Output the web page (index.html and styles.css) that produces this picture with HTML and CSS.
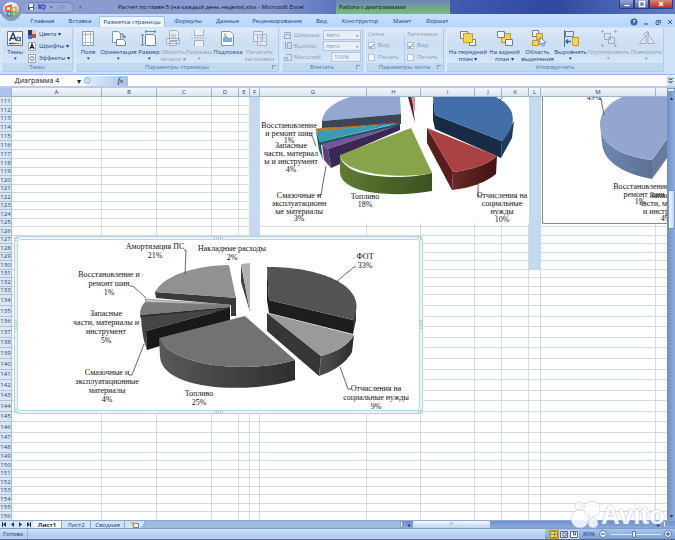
FILE: index.html
```html
<!DOCTYPE html>
<html lang="ru">
<head>
<meta charset="utf-8">
<title>Microsoft Excel</title>
<link rel="stylesheet" href="styles.css">
</head>
<body>
<header class="titlebar">
  <div class="quick">
    <button class="qbtn" aria-label="Сохранить"><svg width="8" height="8" viewBox="0 0 8 8"><path d="M1 1h6v6H1z" fill="#4a55b8"/><path d="M2 1h4v3H2z" fill="#e8efff"/><path d="M3 5h3v2H3z" fill="#fff"/></svg></button>
    <button class="qbtn" aria-label="Отменить"><svg width="9" height="8" viewBox="0 0 9 8"><path d="M1 1v4h4M1.500 4.500C3 1.500 7 1 7 4c0 1.500-1 2.500-2 3" fill="none" stroke="#3a50c0" stroke-width="1.400"/></svg></button>
    <span class="mini">▾</span>
    <button class="qbtn faded" aria-label="Вернуть"><svg width="9" height="8" viewBox="0 0 9 8"><path d="M8 1v4H4M7.500 4.500C6 1.500 2 1 2 4c0 1.500 1 2.500 2 3" fill="none" stroke="#6f7fb8" stroke-width="1.200"/></svg></button>
  </div>
  <span class="mini more">▾</span>
  <h1 class="doc-title">Расчет по главе 5 (на каждый день недели).xlsx - Microsoft Excel</h1>
  <div class="context">Работа с диаграммами</div>
  <div class="winbtns">
    <button aria-label="Свернуть"><svg width="10" height="8"><path d="M2 4.500h6v2H2z" fill="#fff" stroke="#445" stroke-width=".5"/></svg></button>
    <button aria-label="Развернуть"><svg width="10" height="8"><path d="M2.500 1.500h5v5h-5z" fill="none" stroke="#fff" stroke-width="1.500"/></svg></button>
    <button class="close" aria-label="Закрыть"><svg width="10" height="8"><path d="M3 2l4 4M7 2L3 6" stroke="#fff" stroke-width="1.600"/></svg></button>
  </div>
</header>

<button class="office" aria-label="Кнопка Office">
  <svg width="20" height="20" viewBox="0 0 20 20">
    <defs><radialGradient id="orb" cy=".3"><stop offset="0" stop-color="#fff"/><stop offset=".65" stop-color="#dfe4ee"/><stop offset="1" stop-color="#8e9ab8"/></radialGradient></defs>
    <circle cx="10" cy="10" r="9.600" fill="url(#orb)" stroke="#6c7cae" stroke-width=".6"/>
    <g fill="none" stroke-width="1.700"><path d="M5 6l5-1.500v5l-5 .5z" stroke="#e2582a"/><path d="M11 6.500h4v4h-4z" stroke="#f0a52c"/><path d="M6.500 11h3.500v4H6.500z" stroke="#4b83c9"/><path d="M11 11.500h4v3.500h-4z" stroke="#7cb342"/></g>
  </svg>
</button>

<nav class="tabs">
  <button class="t-home">Главная</button><button class="t-ins">Вставка</button><button class="t-page active">Разметка страницы</button><button class="t-form">Формулы</button><button class="t-data">Данные</button><button class="t-rev">Рецензирование</button><button class="t-view">Вид</button><button class="t-con">Конструктор</button><button class="t-mak">Макет</button><button class="t-fmt">Формат</button>
  <div class="docbtns">
    <button aria-label="Справка"><svg width="8" height="8"><circle cx="4" cy="4" r="3.500" fill="#3265cf"/><path d="M3 3q1-1.500 2 0q0 .7-1 1.200v.8" fill="none" stroke="#fff"/></svg></button>
    <button aria-label="Свернуть окно"><svg width="8" height="8"><path d="M2 6h4" stroke="#46618f" stroke-width="1.200"/></svg></button>
    <button aria-label="Восстановить окно"><svg width="8" height="8"><path d="M2.500 2.500H6.500V5M2 4h3v2.500H2z" fill="none" stroke="#46618f"/></svg></button>
    <button aria-label="Закрыть окно"><svg width="8" height="8"><path d="M2 2l4 4M6 2L2 6" stroke="#46618f"/></svg></button>
  </div>
</nav>

<section class="ribbon">
  <div class="group g-themes">
    <div class="body">
      <button class="big w-theme"><svg width="18" height="17" viewBox="0 0 18 17"><path d="M1.500 1.500h15v14h-15z" fill="#fff" stroke="#64779c"/><path d="M3.500 11L7 3l3.500 8M5 8.500h4" fill="none" stroke="#23406e" stroke-width="1.500"/><circle cx="12.500" cy="9" r="1.800" fill="none" stroke="#3c6aa8" stroke-width="1.300"/><path d="M14.500 7v4.500" stroke="#3c6aa8"/><path d="M3 13.500h3" stroke="#2c4c86" stroke-width="1.500"/><path d="M6 13.500h3" stroke="#b23a2c" stroke-width="1.500"/><path d="M9 13.500h3" stroke="#7aa23c" stroke-width="1.500"/><path d="M12 13.500h3" stroke="#e09a3c" stroke-width="1.500"/></svg><span>Темы</span><i>▾</i></button>
      <div class="stack">
        <button><svg width="9" height="9"><path d="M0 0h4v5H0z" fill="#24406e"/><path d="M4 0h4v4H4z" fill="#b9cfe8"/><path d="M0 5h4v4H0z" fill="#4573c0"/><path d="M4 4h4v4H4z" fill="#cf4a28"/></svg>Цвета ▾</button>
        <button><svg width="9" height="9"><path d="M.5.5h7v8h-7z" fill="#fff" stroke="#9aa8c0"/><path d="M2 7l2-5 2 5M3 5.500h2" fill="none" stroke="#111" stroke-width="1.100"/></svg>Шрифты ▾</button>
        <button><svg width="9" height="9"><path d="M.5.5h7v8h-7z" fill="#fff" stroke="#9aa8c0"/><circle cx="4" cy="4.500" r="2" fill="#dfe7f2" stroke="#7688a8"/></svg>Эффекты ▾</button>
      </div>
    </div>
    <h2>Темы</h2>
  </div>
  <div class="group g-page">
    <div class="body">
      <button class="big w24"><svg width="16" height="17" viewBox="0 0 16 17"><path d="M2.500 1.500h11v14h-11z" fill="#fff" stroke="#8295b5"/><path d="M5.500 1v15M10.500 1v15M2 4.500h12M2 12.500h12" stroke="#a9bfe0"/></svg><span>Поля</span><i>▾</i></button>
      <button class="big w37"><svg width="16" height="17" viewBox="0 0 16 17"><path d="M1.500 1.500h6l2 2v9h-8z" fill="#f5f8fd" stroke="#8295b5"/><path d="M5.500 9.500h7l2 2v4h-9z" fill="#fff" stroke="#7088b0"/><path d="M9 4q4-1 4 4M11 6l2 2 2-2" fill="none" stroke="#7b8698" stroke-width="1.200"/></svg><span>Ориентация</span><i>▾</i></button>
      <button class="big w24"><svg width="16" height="17" viewBox="0 0 16 17"><path d="M4.500 4.500h8l2 2v9h-10z" fill="#fff" stroke="#6b86b4"/><path d="M4 1.500h11M1.500 4v12M5 0v3M14 0v3M0 5h3M0 15h3" stroke="#6b86b4"/></svg><span>Размер</span><i>▾</i></button>
      <button class="big w24 off"><svg width="16" height="17" viewBox="0 0 16 17"><path d="M4.500.5h7l2 2v8h-9zM1.500 8.500h13v5h-13zM4.500 11.500h7v4h-7z" fill="#e9eef5" stroke="#a3b0c4"/><path d="M6 4h5v4H6z" fill="#c6d0de"/></svg><span>Область<br>печати ▾</span></button>
      <button class="big w28 off"><svg width="16" height="17" viewBox="0 0 16 17"><path d="M3.500 0v5.500h9V0M3.500 16v-5.500h9V16" fill="#edf1f7" stroke="#a3b0c4"/><path d="M0 8h16" stroke="#a3b0c4" stroke-dasharray="2 1"/></svg><span>Разрывы</span><i>▾</i></button>
      <button class="big w30"><svg width="16" height="17" viewBox="0 0 16 17"><path d="M1.500 1.500h9l3 3v11h-12z" fill="#fff" stroke="#8295b5"/><path d="M3 12V8l3-3 3 3 3-1v5z" fill="#86a9d8"/><circle cx="5" cy="4.500" r="1.300" fill="#e8b64c"/></svg><span>Подложка</span></button>
      <button class="big w33 off"><svg width="16" height="17" viewBox="0 0 16 17"><path d="M1.500 1.500h9v10h-9zM5.500 4.500h9v11h-9z" fill="#e9eef5" stroke="#a3b0c4"/><path d="M5 8h10M5 11.500h10M9 4v12M1 4.500h9" stroke="#b3bfd0"/></svg><span>Печатать<br>заголовки</span></button>
    </div>
    <h2>Параметры страницы<b></b></h2>
  </div>
  <div class="group g-fit">
    <div class="body form">
      <label for="fw"><svg width="8" height="8"><path d="M.5 3.500h6v4h-6zM0 1.500h7" fill="none" stroke="#9aa8be"/></svg>Ширина:</label><select id="fw" disabled><option>Авто</option></select>
      <label for="fh"><svg width="8" height="8"><path d="M3.500.5h4v6h-4zM1.500 0v7" fill="none" stroke="#9aa8be"/></svg>Высота:</label><select id="fh" disabled><option>Авто</option></select>
      <label for="fs"><svg width="8" height="8"><path d="M.5 4.500h3v3h-3zM2.500 1.500h5v6h-3" fill="none" stroke="#9aa8be"/></svg>Масштаб:</label><input id="fs" class="scale" value="100%" disabled>
    </div>
    <h2>Вписать<b></b></h2>
  </div>
  <div class="group g-sheet">
    <div class="body checks">
      <fieldset><legend>Сетка</legend><label><input type="checkbox" checked disabled>Вид</label><label><input type="checkbox" disabled>Печать</label></fieldset>
      <fieldset><legend>Заголовки</legend><label><input type="checkbox" checked disabled>Вид</label><label><input type="checkbox" disabled>Печать</label></fieldset>
    </div>
    <h2>Параметры листа<b></b></h2>
  </div>
  <div class="group g-arr">
    <div class="body">
      <button class="big w40"><svg width="18" height="17" viewBox="0 0 18 17"><path d="M1.500 1.500h7v7h-7zM10.500 9.500h6v6h-6z" fill="#f4f7fb" stroke="#6d7f9e"/><path d="M4.500 3.500h9v9h-9z" fill="#ffd44c" stroke="#c8972a"/></svg><span>На передний<br>план ▾</span></button>
      <button class="big w32"><svg width="18" height="17" viewBox="0 0 18 17"><path d="M5.500 3.500h9v9h-9z" fill="#ffd44c" stroke="#c8972a"/><path d="M1.500 1.500h7v6h-7zM9.500 9.500h7v6h-7z" fill="#f4f7fb" stroke="#6d7f9e"/></svg><span>На задний<br>план ▾</span></button>
      <button class="big w33"><svg width="18" height="17" viewBox="0 0 18 17"><path d="M3.500.5h6v6h-6z" fill="#f4f7fb" stroke="#6d7f9e"/><path d="M7.500 3.500h6v6h-6z" fill="#ffd44c" stroke="#c8972a"/><path d="M3.500 10.500h6v5h-6z" fill="#ffd44c" stroke="#c8972a"/><path d="M11 7v8l2-2 1 3 1.500-.6-1-2.800h2.500z" fill="#fff" stroke="#4a6ea8" stroke-width=".8"/></svg><span>Область<br>выделения</span></button>
      <button class="big w33"><svg width="18" height="17" viewBox="0 0 18 17"><path d="M2.500 0v17" stroke="#4673b8"/><path d="M3.500 1.500h8v5h-8z" fill="#e4e9f1" stroke="#6d7f9e"/><path d="M10.500 7.500h6v8h-6z" fill="#ffd44c" stroke="#c8972a"/><path d="M9 11.500H4M6 9.500l-2 2 2 2" fill="none" stroke="#2b62c4" stroke-width="1.300"/></svg><span>Выровнять</span><i>▾</i></button>
      <button class="big w43 off"><svg width="16" height="17" viewBox="0 0 16 17"><path d="M3.500 3.500h6v6h-6zM7.500 7.500h6v6h-6z" fill="none" stroke="#9facc2"/><path d="M0 1.500h3M13 1.500h3M0 15.500h3M13 15.500h3M1.500 0v3M14.500 0v3M1.500 14v3M14.500 14v3" stroke="#9facc2"/></svg><span>Группировать</span><i>▾</i></button>
      <button class="big w32 off"><svg width="18" height="17" viewBox="0 0 18 17"><path d="M1.500 13.500L8 5v8.500zM10 13.500V4l6.500 9.500z" fill="#e3e9f2" stroke="#9facc2"/><path d="M5 5q2-4 6-2M9 1l2 2-2 2" fill="none" stroke="#9facc2"/></svg><span>Повернуть</span><i>▾</i></button>
    </div>
    <h2>Упорядочить</h2>
  </div>
</section>

<div class="formula">
  <input class="namebox" aria-label="Имя" value="Диаграмма 4">
  <span class="drop">▾</span>
  <div class="fx"><svg width="7" height="7"><circle cx="3.500" cy="3.500" r="2.800" fill="#d6e3f6" stroke="#8fa9cf"/></svg><button aria-label="Вставить функцию"><em>f</em><sub>x</sub></button></div>
  <input class="fbox" aria-label="Строка формул">
  <button class="expand" aria-label="Развернуть строку формул"><svg width="7" height="8"><path d="M1.500 1l2 2 2-2M1.500 4l2 2 2-2" fill="none" stroke="#223"/></svg></button>
</div>

<main class="work">
  <div class="sheet">
    <table>
      <colgroup><col class="c-n"><col class="c-a"><col class="c-b"><col class="c-b"><col class="c-d"><col class="c-e"><col class="c-f"><col class="c-g"><col class="c-h"><col class="c-h"><col class="c-d"><col class="c-d"><col class="c-l"><col class="c-m"><col class="c-h"></colgroup>
      <thead><tr><th class="corner"></th><th>A</th><th>B</th><th>C</th><th>D</th><th>E</th><th>F</th><th>G</th><th>H</th><th>I</th><th>J</th><th>K</th><th>L</th><th>M</th><th></th></tr></thead>
      <tbody id="rows"></tbody>
    </table>

    <svg class="chart chart-color" width="269" height="126" viewBox="260 97 269 126">
      <defs>
        <linearGradient id="gGreen"><stop offset="0" stop-color="#5f7c33"/><stop offset=".5" stop-color="#4c6528"/><stop offset="1" stop-color="#3d5220"/></linearGradient>
        <linearGradient id="gRed"><stop offset="0" stop-color="#6b2826"/><stop offset="1" stop-color="#401413"/></linearGradient>
      </defs>
      <path d="M260 97h269v126H260z" fill="#fff"/>
      <path d="M322 121C323 110 334 102 350 97H400L401 114z" fill="#93a7d1"/>
      <path d="M322 121L401 114V124L322 128z" fill="#3d4659"/>
      <path d="M316 129L400 122L317 131.500z" fill="#e07b22" stroke="#713a12" stroke-width=".5"/>
      <path d="M316 131.500L400 122.500L320 142z" fill="#3a9cb0"/>
      <path d="M316 131.500L320 142L400 123V126L321 145L323 160L319 150z" fill="#175a6a"/>
      <path d="M322 144L400 125L328 149z" fill="#71589a"/>
      <path d="M322 144L328 149L331 168L324 160z" fill="#59417c"/>
      <path d="M328 149L400 125V130L340 156V164L331 168z" fill="#392852"/>
      <path d="M340 155C343 180 405 180 432 173V191C395 198 342 194 340 173z" fill="url(#gGreen)"/>
      <path d="M411 128L432 173C405 179 344 176 340 155z" fill="#87a44b"/>
      <path d="M408 97h4l3 26z" fill="#611d22"/><path d="M411 97h4v16z" fill="#dc8f91"/>
      <path d="M502 141L514 121L512 138L501 158z" fill="#1d3b5e"/>
      <path d="M433 97L435 115L502 141L501 158L435 129L433 120z" fill="#182d45"/>
      <path d="M433 97H496C514 106 520 122 502 141L435 115z" fill="#426fa7"/>
      <path d="M427 128L453 172L452 190L427 143z" fill="#5b1c1c"/>
      <path d="M453 172Q484 168 497 156L496 174Q480 187 452 190z" fill="url(#gRed)"/>
      <path d="M427 128L497 156Q484 168 453 172z" fill="#a94343"/>
      <path class="lead" d="M310 135l2 1 4 10M326 166l-5 29h-4M478 184v12h3M499 101l4-4"/>
      <g class="txt"><text x="289" y="128">Восстановление</text><text x="289" y="136">и ремонт шин</text><text x="289" y="143">1%</text><text x="291" y="148">Запасные</text><text x="291" y="156">части, материал</text><text x="291" y="164">ы и инструмент</text><text x="291" y="172">4%</text><text x="299" y="198">Смазочные и</text><text x="299" y="206">эксплуатационн</text><text x="299" y="214">ые материалы</text><text x="299" y="221">3%</text><text x="365" y="199">Топливо</text><text x="365" y="207">18%</text><text x="502" y="198">Отчисления на</text><text x="502" y="206">социальные</text><text x="502" y="214">нужды</text><text x="502" y="222">10%</text></g>
    </svg>

    <svg class="chart chart-right" width="200" height="127" viewBox="542 97 200 127">
      <defs><linearGradient id="gBlue"><stop offset="0" stop-color="#7187b0"/><stop offset="1" stop-color="#5d7095"/></linearGradient></defs>
      <path d="M542.500 90v133.500h250V90" fill="#fff" stroke="#8b8b8b"/>
      <path d="M600 124C600 144 620 156 652 160V179C620 173 603 160 602 143z" fill="url(#gBlue)"/>
      <path d="M652 160L667 139V158L652 179z" fill="#687b9f"/>
      <path d="M622 97C609 103 600 112 600 124C600 144 620 156 652 160L667 139V97z" fill="#93a6cf"/>
      <path class="lead" d="M599 99h2l3 16"/>
      <g class="txt"><text x="594" y="100">49%</text><text x="644" y="189">Восстановление и</text><text x="644" y="197">ремонт шин</text><text x="640" y="204">1%</text><text x="666" y="198">Запасные</text><text x="669" y="206">части, материалы</text><text x="666" y="214">и инструмент</text><text x="666" y="221">4%</text></g>
    </svg>

    <svg class="chart chart-gray" width="409" height="178" viewBox="14 236 409 178">
      <defs>
        <linearGradient id="gFuel"><stop offset="0" stop-color="#5a5a5a"/><stop offset=".35" stop-color="#494949"/><stop offset="1" stop-color="#2f2f2f"/></linearGradient>
        <linearGradient id="gSoc"><stop offset="0" stop-color="#515151"/><stop offset="1" stop-color="#2d2d2d"/></linearGradient>
      </defs>
      <rect x="14.500" y="236.500" width="408" height="177" rx="2" fill="#e9f5f7" stroke="#b5d5db"/>
      <rect x="17.500" y="239.500" width="402" height="171" rx="3" fill="#fff" stroke="#b9d8de"/>
      <path d="M214 238h9M214 412h9M16 320v9M421 320v9" stroke="#6f98a2" stroke-dasharray="1 1"/>
      <path d="M16 241v-3h3M418 238h3v3M16 409v3h3M418 412h3v-3" fill="none" stroke="#6f98a2" stroke-dasharray="1 1"/>
      <path d="M155 292L225 297L236 298V316H231V305L156 298z" fill="#3a3a3a"/>
      <path d="M155 292C163 277 190 266 229 265L236 298z" fill="#919191"/>
      <path d="M145 299L230 305L146 302z" fill="#c6c6c6" stroke="#777" stroke-width=".6"/>
      <path d="M145 302L230 305V307L140 315Q140 307 145 302z" fill="#7b7b7b"/>
      <path d="M140 315L230 307V311L141 319z" fill="#2d2d2d"/>
      <path d="M141 317L230 308L146 331L147 350Q142 338 141 317z" fill="#454545"/>
      <path d="M146 331L230 308V320L160 346L147 350z" fill="#191919"/>
      <path d="M159 338C172 367 250 374 295 360V380C248 394 163 391 160 357z" fill="url(#gFuel)"/>
      <path d="M245 316L295 360C250 374 172 367 159 338z" fill="#727272"/>
      <path d="M241 264L250 312L241 282z" fill="#414141"/><path d="M241 264L250 263V312z" fill="#b0b0b0"/>
      <path d="M353 320L356 303V320L353 334z" fill="#343434"/>
      <path d="M267 267L269 300L353 320V334L269 313L267 300z" fill="#1e1e1e"/>
      <path d="M267 267C310 266 372 282 353 320L269 300z" fill="#535353"/>
      <path d="M267 313L321 356L319 376L267 331z" fill="#363636"/>
      <path d="M321 356Q345 350 354 335L352 352Q343 368 319 376z" fill="url(#gSoc)"/>
      <path d="M267 313L354 335Q345 350 321 356z" fill="#9a9a9a"/>
      <path class="lead" d="M184 250h2l-1 24M130 286h3l13 12M129 375h3l12-31M356 267h-2l-18 15M340 367l8 22h3"/>
      <g class="txt"><text x="155" y="249">Амортизация ПС</text><text x="155" y="258">21%</text><text x="232" y="251">Накладные расходы</text><text x="232" y="260">2%</text><text x="109" y="277">Восстановление и</text><text x="109" y="286">ремонт шин</text><text x="109" y="295">1%</text><text x="106" y="316">Запасные</text><text x="106" y="325">части, материалы и</text><text x="106" y="334">инструмент</text><text x="106" y="343">5%</text><text x="107" y="375">Смазочные и</text><text x="107" y="384">эксплуатационные</text><text x="107" y="393">материалы</text><text x="107" y="402">4%</text><text x="199" y="396">Топливо</text><text x="199" y="405">25%</text><text x="365" y="259">ФОТ</text><text x="365" y="268">33%</text><text x="376" y="391">Отчисления на</text><text x="376" y="400">социальные нужды</text><text x="376" y="409">9%</text></g>
    </svg>
  </div>
  <div class="vscroll"><span class="split"></span><span class="arr">▴</span><span class="thumb"></span><span class="arr end">▾</span></div>
</main>

<div class="bottom">
  <div class="nav"><button aria-label="Первый лист"><svg width="5" height="5"><path d="M0 0h1v5H0zM4 0v5L1 2.500z"/></svg></button><button aria-label="Предыдущий лист"><svg width="5" height="5"><path d="M4 0v5L1 2.500z"/></svg></button><button aria-label="Следующий лист"><svg width="5" height="5"><path d="M1 0v5l3-2.500z"/></svg></button><button aria-label="Последний лист"><svg width="5" height="5"><path d="M1 0v5l3-2.500zM4 0h1v5H4z"/></svg></button></div>
  <button class="stab on">Лист1</button><button class="stab">Лист2</button><button class="stab wide">Сводная</button><button class="stab new" aria-label="Новый лист"><svg width="10" height="7"><path d="M3.500 2.500h5v4h-5z" fill="#fff" stroke="#6d83a8"/><circle cx="3" cy="2.500" r="1.800" fill="#f2a53a"/></svg></button>
  <div class="hscroll"><span class="grip"></span><span class="arr">◂</span><span class="hthumb">III</span><span class="arr end">▸</span><span class="grip"></span></div>
</div>

<footer class="status">
  <span class="ready">Готово</span>
  <div class="right">
    <div class="views"><button class="on" aria-label="Обычный"><svg width="8" height="7"><path d="M.5.500h7v6h-7zM0 3.500h8M4.500 0v7" fill="none" stroke="#a58a34"/></svg></button><button aria-label="Разметка"><svg width="8" height="7"><path d="M.5.500h7v6h-7z" fill="#dbe5f2" stroke="#556a8e"/><path d="M3 2h3v3H3z" fill="#fff" stroke="#556a8e"/></svg></button><button aria-label="Страничный"><svg width="8" height="7"><path d="M.5.500h7v6h-7zM3.500 0v4h2V0" fill="#fff" stroke="#556a8e"/></svg></button></div>
    <button class="pct">80%</button>
    <button class="zb" aria-label="Уменьшить"><svg width="8" height="8"><circle cx="4" cy="4" r="3.500" fill="#eef4fc" stroke="#5b79ad"/><path d="M2 4h4" stroke="#345"/></svg></button>
    <input type="range" class="zoom" aria-label="Масштаб" value="45">
    <button class="zb" aria-label="Увеличить"><svg width="8" height="8"><circle cx="4" cy="4" r="3.500" fill="#eef4fc" stroke="#5b79ad"/><path d="M2 4h4M4 2v4" stroke="#345"/></svg></button>
  </div>
</footer>

<div class="mark">
  <svg width="32" height="34" viewBox="0 0 32 34"><g fill="#fff" stroke="#b9c3d3" stroke-width=".6"><circle cx="11" cy="21" r="9"/><circle cx="23" cy="11" r="8"/><circle cx="10" cy="8" r="4"/><circle cx="24" cy="25" r="5"/></g></svg>
  <span>Avito</span>
</div>
<script src="script.js"></script>
</body>
</html>
```
FILE: styles.css
```css
* { box-sizing: border-box; }
html, body { height: 100%; }
body {
  margin: 0; position: relative; display: flex; flex-direction: column; overflow: hidden;
  font: 6px/7px "Open Sans", "Noto Sans", sans-serif; color: #15428b; background: #bfdbff;
}
button { margin: 0; padding: 0; border: 0; background: none; font: inherit; color: inherit; white-space: nowrap; }
input, select { margin: 0; padding: 0; border: 0; font: inherit; color: inherit; border-radius: 0; min-width: 0; }
svg { display: block; flex: none; }

.titlebar {
  display: flex; align-items: center; height: 14px; flex: none; padding-left: 26px; color: #0a0f28;
  background: linear-gradient(90deg, #8c9bd0 0, #8997cd 40%, #5a72c0 50%, #3f57ae 70%, #3049a0 82%, #5f7cc8 100%);
}
.quick { display: flex; align-items: center; gap: 3px; width: 48px; height: 11px; padding-left: 1px; border: 1px solid #7484bd; border-left: 0; border-radius: 0 6px 6px 0; background: #9aa8d8; }
.faded { opacity: .5; }
.mini { font-size: 5px; color: #4a5b9a; }
.more { width: 44px; padding-left: 5px; }
.doc-title { margin: 0; width: 218px; font: inherit; white-space: nowrap; }
.context { width: 114px; height: 14px; padding: 4px 3px 0; white-space: nowrap; background: linear-gradient(#6b86b8, #74a888 60%, #7bbf6c); }
.winbtns { display: flex; margin-left: auto; align-self: flex-start; padding-right: 2px; }
.winbtns button { display: flex; justify-content: center; width: 15px; height: 9px; border: 1px solid #2b3d7c; border-top: 0; background: linear-gradient(#93a7d6, #4c66ae); }
.winbtns .close { width: 24px; align-items: center; background: linear-gradient(#dd8678, #b92c1c); }
.office { position: absolute; left: 1px; top: 1px; z-index: 3; }

.tabs { display: flex; align-items: flex-end; height: 13px; flex: none; padding-left: 24px; background: linear-gradient(#c8e0ff, #b7d5fb); }
.tabs > button { height: 11px; }
.t-home { width: 37px; } .t-ins { width: 38px; } .t-page { width: 66px; } .t-form { width: 46px; }
.t-data { width: 33px; } .t-rev { width: 66px; } .t-view { width: 23px; } .t-con { width: 54px; }
.t-mak { width: 30px; } .t-fmt { width: 40px; }
.tabs .active { border: 1px solid #9fc0ea; border-bottom: 0; border-radius: 2px 2px 0 0; background: #eef5fd; }
.docbtns { display: flex; gap: 4px; height: 11px; align-items: center; margin-left: auto; padding-right: 1px; }

.ribbon { display: flex; gap: 2px; height: 48px; flex: none; padding: 1px 0 2px 1px; background: #d0e2f8; border-bottom: 1px solid #8fb3e3; }
.group { display: flex; flex-direction: column; flex: none; border: 1px solid #b0cbec; border-top: 0; border-left-color: #e4effb; border-radius: 2px; background: linear-gradient(#dde9f7, #cbdef3 40%, #d8e8f8); overflow: hidden; }
.g-themes { width: 72px; } .g-page { width: 204px; } .g-fit { width: 82px; } .g-sheet { width: 79px; } .g-arr { width: 218px; }
.body { display: flex; flex: 1; min-height: 0; padding-top: 2px; }
.group h2 { position: relative; margin: 0; height: 8px; flex: none; font: inherit; line-height: 9px; text-align: center; color: #4a74ae; background: #c1d8f1; }
.group h2 b { position: absolute; right: 2px; top: 2px; width: 4px; height: 4px; border: 1px solid #7f9cc4; border-width: 1px 0 0 1px; }
.big { display: flex; flex-direction: column; align-items: center; flex: none; }
.big span { margin-top: 2px; }
.big i { font-style: normal; font-size: 5px; line-height: 5px; }
.off, .form, .checks { color: #8f9cb0; }
.w-theme { width: 26px; } .w24 { width: 24px; } .w28 { width: 28px; } .w30 { width: 30px; }
.w32 { width: 33px; } .w33 { width: 33px; } .w37 { width: 37px; } .w40 { width: 40px; } .w43 { width: 43px; }
.g-arr .body { padding-left: 1px; }
.stack { display: flex; flex-direction: column; gap: 2px; }
.stack button { display: flex; align-items: center; gap: 2px; height: 10px; }
.form { display: grid; grid-template-columns: 39px 38px; grid-auto-rows: 10px; row-gap: 1px; padding: 2px 0 0 2px; align-items: center; align-content: start; }
.form label { display: flex; align-items: center; gap: 2px; white-space: nowrap; }
.form select, .form input { height: 10px; padding-left: 2px; border: 1px solid #b3c5dc; background: #e9eff6; color: #8f9cb0; opacity: 1; }
.form select { appearance: none; background: linear-gradient(45deg, transparent 50%, #8f9cb0 50%) no-repeat 32px 4px / 2px 2px #e9eff6; }
.form .scale { width: 30px; margin-left: 8px; }
.checks { padding-top: 1px; }
.checks fieldset { flex: 1; display: flex; flex-direction: column; gap: 2px; min-width: 0; margin: 0; padding: 0 0 0 2px; border: 0; }
.checks fieldset + fieldset { border-left: 1px solid #b6cce6; }
.checks legend { height: 11px; padding: 2px 0 0; }
.checks label { display: flex; align-items: center; gap: 3px; height: 10px; }
.checks input { appearance: none; width: 7px; height: 7px; border: 1px solid #b3bfce; background: #f7f9fc; display: grid; place-items: center; }
.checks input:checked::after { content: ""; width: 2px; height: 4px; border: solid #8593a8; border-width: 0 1px 1px 0; transform: rotate(40deg); }

.formula { display: flex; align-items: center; height: 13px; flex: none; padding: 1px 0; background: #fff; border-bottom: 2px solid #b4cdee; color: #111; }
.namebox { width: 74px; text-align: center; font-size: 7px; }
.drop { width: 9px; text-align: center; color: #223; font-size: 8px; }
.fx { display: flex; justify-content: space-between; align-items: center; width: 45px; height: 10px; padding: 0 5px 0 1px; border-radius: 5px 0 0 5px; background: linear-gradient(90deg, #e9f1fc, #a9c2e8); font: 8px/8px "Liberation Serif", serif; }
.fx sub { font-size: 6px; vertical-align: baseline; }
.fbox { flex: 1; height: 10px; }
.expand { width: 8px; height: 10px; background: #cfe0f7; }

.work { display: flex; flex: 1; min-height: 0; }
.sheet { position: relative; flex: 1; min-width: 0; overflow: hidden; background: #fff; }
table { table-layout: fixed; width: 710px; border-collapse: separate; border-spacing: 0; }
th, td { padding: 0; border: solid #d3dbe8; border-width: 0 1px 1px 0; font-weight: 400; line-height: 7px; overflow: hidden; }
thead th { height: 9px; color: #27415f; border-color: #9eb6ce; background: linear-gradient(#f5f8fc, #d9e3f0); }
tbody th { color: #27415f; background: #dce7f5; border-color: #a9c0dd; }
thead .corner { background: #a9c4e9; }
td.fill { background: #c5d9f1; border-color: #c5d9f1; }
.c-n { width: 12px; } .c-a { width: 90px; } .c-b { width: 55px; } .c-d { width: 27px; } .c-e { width: 11px; }
.c-f { width: 10px; } .c-g { width: 107px; } .c-h { width: 54px; } .c-l { width: 12px; } .c-m { width: 115px; }

.chart { position: absolute; }
.chart-color { left: 260px; top: 9px; }
.chart-right { left: 542px; top: 9px; }
.chart-gray { left: 14px; top: 148px; }
.txt { font: 8px "Liberation Serif", serif; fill: #111; text-anchor: middle; }
.lead { fill: none; stroke: #444; stroke-width: .8; }

.vscroll { display: flex; flex-direction: column; align-items: center; width: 8px; flex: none; background: linear-gradient(90deg, #6d8fc8, #8fade0); }
.split { width: 8px; height: 4px; border: 1px solid #7d99c8; background: #e6effc; }
.arr { font-size: 6px; line-height: 8px; color: #1b3564; }
.end { margin-top: auto; }
.vscroll > .arr:not(.end) { padding-top: 2px; }
.thumb { width: 7px; height: 39px; margin-top: 88px; border: 1px solid #7893c2; border-radius: 1px; background: linear-gradient(90deg, #f2f7fe, #c3d6f0); }

.bottom { display: flex; height: 8px; flex: none; line-height: 8px; background: #9fbce3; border-top: 1px solid #8aa9d2; }
.nav { display: flex; align-items: center; justify-content: space-around; width: 33px; background: #d5e4f7; fill: #1d355f; }
.stab { width: 29px; background: #d3e3f7; border-right: 1px solid #8ca8cf; }
.stab.on { font-weight: 700; color: #1d2f55; background: #fff; }
.stab.wide { width: 34px; }
.stab.new { width: 20px; display: grid; place-items: center; border-radius: 0 0 6px 0; }
.hscroll { display: flex; align-items: center; width: 275px; margin-left: auto; padding-right: 9px; background: linear-gradient(#6f91c9, #8aaadd); }
.hscroll .arr { width: 10px; text-align: center; }
.grip { width: 3px; height: 7px; background: #e8f0fb; border: 1px solid #86a1cc; }
.hthumb { width: 77px; height: 7px; text-align: center; font-size: 4px; line-height: 6px; color: #6f86ad; border-radius: 1px; background: linear-gradient(#f4f8fe, #bdd1ee); }
.hscroll .end { margin: 0 0 0 auto; }

.status { display: flex; height: 12px; flex: none; line-height: 10px; color: #1a3360; background: linear-gradient(#d6e5f9, #aecbf3 60%, #bcd5f7); border-bottom: 1px solid #55698c; border-top: 1px solid #7d9cca; }
.ready { width: 28px; padding-left: 3px; border-right: 1px solid #98b5de; }
.right { display: flex; align-items: center; width: 130px; margin-left: auto; padding: 0 2px 0 4px; background: linear-gradient(#a9c5ef, #7a9fd8); }
.views { display: flex; background: #c8daf3; }
.views button { display: grid; place-items: center; width: 10px; height: 9px; }
.views .on { background: #ffd873; border: 1px solid #c89a3c; }
.pct { width: 20px; }
.zb { width: 9px; }
.zoom { flex: 1; margin: 0 3px; height: 8px; appearance: none; background: linear-gradient(#dce8f9, #dce8f9) no-repeat center / 100% 1px; }
.zoom::-webkit-slider-thumb { appearance: none; width: 4px; height: 7px; border: 1px solid #5b79ad; border-radius: 0 0 2px 2px; background: #f4f8fe; }

.mark { position: absolute; right: 10px; bottom: 8px; display: flex; align-items: center; opacity: .85; pointer-events: none; font: 700 26px/34px "Liberation Sans", sans-serif; color: #fff; text-shadow: 0 0 2px #8c9bb2; }
```
FILE: script.js
```js
// Worksheet rows start at number 111; each entry is one row's height.
const heights = [
  9, 9, 8, 9, 9, 9, 9, 9, 8, 9, 8, 9, 8, 9, 8, 9, 8, 9, 8, 9, 8, 9, 8,
  11, 11, 10, 11, 10, 11, 11, 10, 11, 10, 11, 10, 11, 10,
  10, 8, 9, 8, 9, 8, 9, 8, 9
];
const FIRST = 111;
const LAST_FILLED = 130;
const body = document.getElementById('rows');

heights.forEach((height, i) => {
  const row = body.insertRow();
  row.style.height = height + 'px';
  const head = document.createElement('th');
  head.scope = 'row';
  head.textContent = FIRST + i;
  row.append(head);
  for (let col = 1; col <= 14; col++) {
    const cell = row.insertCell();
    if ((col === 6 || col === 12) && FIRST + i <= LAST_FILLED) cell.className = 'fill';
  }
});
```
